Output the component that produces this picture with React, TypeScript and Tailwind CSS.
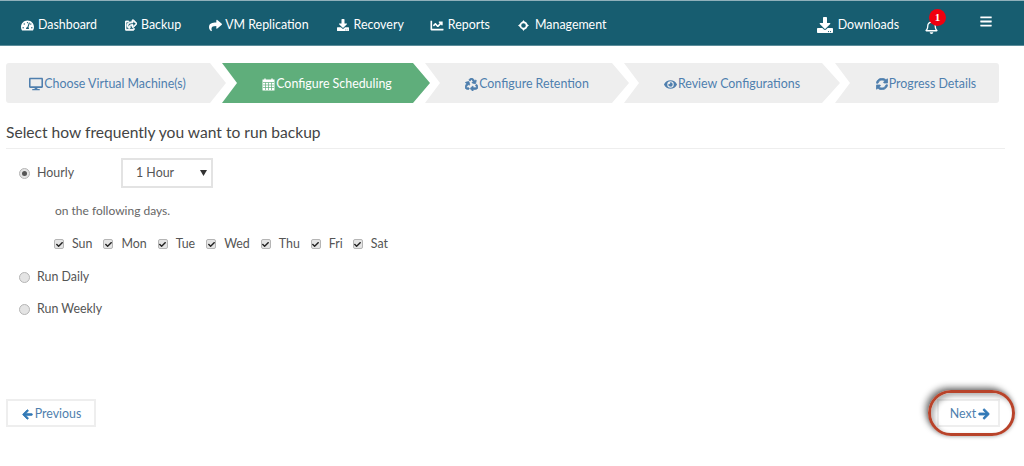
import type { ReactNode } from "react";
import {
  FaArrowLeft,
  FaArrowRight,
  FaBars,
  FaCheck,
  FaDesktop,
  FaDownload,
  FaEye,
  FaRecycle,
  FaRegBell,
  FaRegShareSquare,
  FaShare,
  FaSyncAlt,
  FaTachometerAlt,
  FaChartLine,
} from "react-icons/fa";

function ManagementIcon() {
  return (
    <svg viewBox="0 0 12 12" className="h-[11px] w-[11px]" fill="none">
      <circle cx="6" cy="6" r="3.4" stroke="white" strokeWidth="1.8" />
      <path d="M6 0 7.6 2.4H4.4ZM6 12 7.6 9.6H4.4ZM0 6 2.4 4.4V7.6ZM12 6 9.6 4.4V7.6Z" fill="white" />
    </svg>
  );
}

function CalendarIcon() {
  return (
    <svg viewBox="0 0 13 13" className="h-[13px] w-[13px]" fill="none">
      <rect x="0.5" y="1.5" width="12" height="11" fill="white" />
      <path d="M3 0.5V3M10 0.5V3" stroke="white" strokeWidth="1.4" />
      <path d="M1 4.5H12M1 7H12M1 9.5H12M3.5 4.5V12M6.5 4.5V12M9.5 4.5V12" stroke="#5fae7b" strokeWidth="0.7" />
    </svg>
  );
}

function NavItem({ icon, label, className }: { icon: ReactNode; label: string; className: string }) {
  return (
    <a className={`flex items-center text-white ${className}`}>
      {icon}
      <span>{label}</span>
    </a>
  );
}

function Radio({ checked = false }: { checked?: boolean }) {
  return (
    <span className="flex h-[11px] w-[11px] items-center justify-center rounded-full border border-[#b5b5b5] bg-[#e4e4e4]">
      {checked && <span className="h-[5px] w-[5px] rounded-full bg-[#555]" />}
    </span>
  );
}

function Day({ label, className }: { label: string; className: string }) {
  return (
    <label className={`flex items-center gap-[8px] ${className}`}>
      <span className="flex h-[10px] w-[10px] items-center justify-center rounded-[2px] border border-[#b5b5b5] bg-[#e4e4e4]">
        <FaCheck className="h-[7px] w-[7px] text-[#222]" />
      </span>
      <span>{label}</span>
    </label>
  );
}

const stepText = "flex h-[40px] items-center justify-center gap-[1px] bg-[#eeeeee] pt-[2px] text-[#4f7fae]";

export default function App() {
  return (
    <div className="h-[466px] w-[1024px] overflow-hidden bg-white font-['Lato','Open_Sans',sans-serif] text-[12.4px] text-[#555]">
      <header className="flex h-[46px] items-center border-t border-b border-t-[#8fb0ba] border-b-[#5c8d9a] bg-[#175d70] pl-[21px] pt-[5px] text-white">
        <NavItem icon={<FaTachometerAlt className="mr-[4px] h-[13px] w-[13px]" />} label="Dashboard" className="mr-[28px]" />
        <NavItem icon={<FaRegShareSquare className="mr-[4px] h-[12px] w-[12px] stroke-[40px]" />} label="Backup" className="mr-[28px]" />
        <NavItem icon={<FaShare className="mr-[3px] h-[13px] w-[13px]" />} label="VM Replication" className="mr-[28px]" />
        <NavItem icon={<FaDownload className="mr-[5px] h-[12px] w-[12px]" />} label="Recovery" className="mr-[26px]" />
        <NavItem icon={<FaChartLine className="mr-[4px] h-[13px] w-[14px]" />} label="Reports" className="mr-[28px]" />
        <NavItem icon={<ManagementIcon />} label="Management" className="gap-[6px]" />
        <NavItem
          icon={<FaDownload className="mr-[5px] h-[16px] w-[16px]" />}
          label="Downloads"
          className="ml-auto mr-[26px]"
        />
        <div className="relative mr-[42px] mt-[2px]">
          <FaRegBell className="h-[14px] w-[13px]" />
          <span className="absolute -top-[11px] left-[4px] flex h-[17px] w-[17px] items-center justify-center rounded-full bg-[#f0000f] font-['Liberation_Serif',serif] text-[11px] font-bold text-white">
            1
          </span>
        </div>
        <FaBars className="mb-[9px] mr-[32px] h-[13px] w-[12px]" />
      </header>

      <main className="pl-[6px] pt-[17px]">
        <div className="flex">
          <div className={`${stepText} w-[220px] rounded-l-[3px] pr-[17px] [clip-path:polygon(0_0,204px_0,220px_50%,204px_100%,0_100%)]`}>
            <FaDesktop className="h-[14px] w-[14px]" />
            Choose Virtual Machine(s)
          </div>
          <div className={`${stepText} -ml-[4px] w-[208px] !bg-[#5fae7b] pl-[2px] !text-white [clip-path:polygon(0_0,191px_0,208px_50%,191px_100%,0_100%,15px_50%)]`}>
            <CalendarIcon />
            Configure Scheduling
          </div>
          <div className={`${stepText} -ml-[5px] w-[204px] [clip-path:polygon(0_0,187px_0,204px_50%,187px_100%,0_100%,15px_50%)]`}>
            <FaRecycle className="h-[13px] w-[13px] stroke-[30px]" />
            Configure Retention
          </div>
          <div className={`${stepText} -ml-[5px] w-[216px] [clip-path:polygon(0_0,198px_0,216px_50%,198px_100%,0_100%,15px_50%)]`}>
            <FaEye className="h-[13px] w-[13px]" />
            Review Configurations
          </div>
          <div className={`${stepText} -ml-[5px] w-[164px] rounded-r-[3px] pl-[18px] [clip-path:polygon(0_0,100%_0,100%_100%,0_100%,15px_50%)]`}>
            <FaSyncAlt className="h-[12px] w-[12px] stroke-[30px]" />
            Progress Details
          </div>
        </div>

        <h2 className="mr-[19px] mt-[19px] h-[27px] border-b border-[#eeeeee] text-[15.6px] leading-[20px] text-[#444]">
          Select how frequently you want to run backup
        </h2>

        <div className="mt-[9px] flex h-[30px] items-center pl-[13px]">
          <Radio checked />
          <span className="ml-[7px] w-[84px]">Hourly</span>
          <div className="flex h-[30px] w-[92px] items-center justify-between border-2 border-[#e3e3e3] pl-[13px] pr-[4px]">
            <span>1 Hour</span>
            <svg viewBox="0 0 7 6" className="h-[6px] w-[7px]">
              <path d="M0 0H7L3.5 6Z" fill="#333" />
            </svg>
          </div>
        </div>
        <p className="mt-[14px] pl-[49px] text-[12px] leading-[18px] text-[#666]">on the following days.</p>
        <div className="mt-[15px] flex h-[18px] items-center pl-[48px]">
          <Day label="Sun" className="mr-[11px]" />
          <Day label="Mon" className="mr-[11px]" />
          <Day label="Tue" className="mr-[11px]" />
          <Day label="Wed" className="mr-[11px]" />
          <Day label="Thu" className="mr-[11px]" />
          <Day label="Fri" className="mr-[10px]" />
          <Day label="Sat" className="" />
        </div>
        <div className="mt-[15px] flex h-[18px] items-center gap-[7px] pl-[13px]">
          <Radio />
          <span>Run Daily</span>
        </div>
        <div className="mt-[14px] flex h-[18px] items-center gap-[7px] pl-[13px]">
          <Radio />
          <span>Run Weekly</span>
        </div>

        <div className="mt-[81px] flex items-center justify-between pr-[24px]">
          <button className="flex h-[28px] w-[90px] items-center justify-center gap-[2px] border-2 border-[#eeeeee] pl-[1px] pt-[2px] text-[#4f7fae]">
            <FaArrowLeft className="h-[11px] w-[11px] stroke-[40px] text-[#337ab7]" />
            Previous
          </button>
          <button className="relative flex h-[28px] w-[63px] items-center justify-center gap-[2px] border-2 border-[#eeeeee] pl-[3px] pt-[2px] text-[#4f7fae]">
            Next
            <FaArrowRight className="h-[12px] w-[12px] stroke-[40px] text-[#337ab7]" />
            <span className="absolute -left-[11px] -top-[11px] h-[46px] w-[87px] rounded-[23px] border-[3px] border-[#b8432a] shadow-[-3px_-3px_6px_rgba(0,0,0,0.45),0_0_4px_rgba(0,0,0,0.3),inset_3px_3px_5px_rgba(0,0,0,0.3)]" />
          </button>
        </div>
      </main>
    </div>
  );
}
